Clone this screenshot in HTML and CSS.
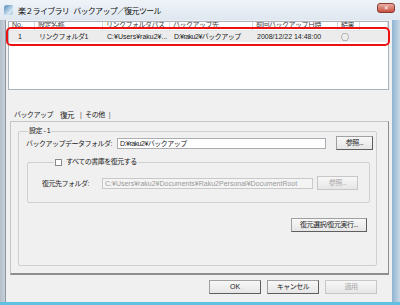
FILE: index.html
```html
<!DOCTYPE html>
<html lang="ja">
<head>
    <meta charset="UTF-8">
    <title>楽２ライブラリ バックアップ／復元ツール</title>
    <link rel="stylesheet" href="styles.css">
</head>
<body>
    <div class="window">
        <div class="titlebar">
            <div class="app-icon"></div>
            <div class="title">楽２ライブラリ バックアップ／復元ツール</div>
            <div class="close">✕</div>
        </div>
        <div class="client">
            <div class="listview">
                <div class="lv-header">
                    <div class="col c-no latin">No.</div>
                    <div class="col c-name">設定名称</div>
                    <div class="col c-link">リンクフォルダパス</div>
                    <div class="col c-dest">バックアップ先</div>
                    <div class="col c-date">前回バックアップ日時</div>
                    <div class="col c-res">結果</div>
                    <div class="col c-rest"></div>
                </div>
                <div class="lv-row">
                    <div class="col c-no num latin">1</div>
                    <div class="col c-name">リンクフォルダ1</div>
                    <div class="col c-link latin">C:¥Users¥raku2¥...</div>
                    <div class="col c-dest">D:¥raku2¥バックアップ</div>
                    <div class="col c-date latin">2008/12/22 14:48:00</div>
                    <div class="col c-res result">○</div>
                </div>
                <div class="mark"></div>
            </div>

            <div class="tabs">
                <span class="tab">バックアップ</span>
                <span class="tab active">復元</span>
                <span class="sep">|</span>
                <span class="tab">その他</span>
                <span class="sep">|</span>
            </div>
            <div class="panel">
                <fieldset class="group">
                    <legend>設定 - 1</legend>
                    <div class="field-row">
                        <span class="label">バックアップデータフォルダ:</span>
                        <div class="input wide">D:¥raku2¥バックアップ</div>
                        <div class="btn small">参照...</div>
                    </div>
                    <fieldset class="group inner">
                        <legend><span class="check"></span>すべての書庫を復元する</legend>
                        <div class="field-row">
                            <span class="label">復元先フォルダ:</span>
                            <div class="input disabled latin">C:¥Users¥raku2¥Documents¥Raku2Personal¥DocumentRoot</div>
                            <div class="btn small disabled">参照...</div>
                        </div>
                    </fieldset>
                    <div class="action-row">
                        <div class="btn action">復元選択/復元実行...</div>
                    </div>
                </fieldset>
            </div>
            <div class="buttons">
                <div class="btn dlg latin">OK</div>
                <div class="btn dlg">キャンセル</div>
                <div class="btn dlg disabled">適用</div>
            </div>
        </div>
    </div>
</body>
</html>
```

FILE: styles.css
```css
body {
    margin: 0;
    font-family: "Liberation Sans", "Noto Sans CJK JP", sans-serif;
    font-size: 7px;
    letter-spacing: -0.5px;
    color: #1a1a1a;
}
.latin {
    letter-spacing: 0;
}
.window {
    width: 400px;
    height: 305px;
    background: linear-gradient(90deg, #b4bec9 0%, #d3dbe4 2%, #dce4ed 96%, #8fb4d2 98%, #c9d8e6 100%);
    box-sizing: border-box;
    border-bottom: 3px solid #5fc0e0;
    overflow: hidden;
}
.titlebar {
    height: 20px;
    display: flex;
    align-items: center;
    padding: 0 5px 0 4px;
    box-sizing: border-box;
    background: linear-gradient(#eef3f8, #dfe7f0);
}
.app-icon {
    width: 9px;
    height: 10px;
    margin-right: 5px;
    border-radius: 3px 1px 3px 1px;
    background: linear-gradient(135deg, #4d86b8, #d7e8f3 70%, #8fb8d6);
}
.title {
    flex: 1;
    font-family: "Noto Sans CJK JP", sans-serif;
    font-size: 8px;
    letter-spacing: -0.7px;
    word-spacing: 3px;
    color: #111;
}
.close {
    align-self: flex-start;
    width: 18px;
    height: 10px;
    margin-top: 3px;
    border-radius: 3px;
    background: linear-gradient(#e9ada3, #c8503f);
    border: 1px solid #8a3b33;
    box-sizing: border-box;
    color: #fff;
    font-size: 6px;
    line-height: 8px;
    text-align: center;
    font-family: "DejaVu Sans", sans-serif;
    font-weight: bold;
}
.client {
    margin: 0 8px 0 5px;
    height: 282px;
    background: #f0f0f0;
    border-left: 1px solid #8d97a3;
    box-sizing: border-box;
    overflow: hidden;
}
.listview {
    position: relative;
    margin: 1px 3px 0 2px;
    height: 69px;
    background: #fff;
    border: 1px solid #a9b3bd;
    box-sizing: border-box;
}
.lv-header, .lv-row {
    display: flex;
    white-space: nowrap;
}
.lv-header {
    height: 8px;
    line-height: 6px;
    overflow: hidden;
    color: #3a3a3a;
    border-bottom: 1px solid #e4e7ea;
}
.lv-header .col {
    border-right: 1px solid #d4d9df;
    padding-left: 3px;
}
.lv-row {
    height: 11px;
    line-height: 11px;
    background: #ececec;
}
.col {
    overflow: hidden;
    padding-left: 4px;
    box-sizing: border-box;
}
.c-no { width: 26px; }
.num { padding-left: 9px; }
.c-name { width: 68px; }
.c-link { width: 67px; }
.c-dest { width: 83px; }
.c-date { width: 85px; }
.c-res { width: 22px; }
.c-rest { flex: 1; }
.result {
    font-family: "Noto Sans CJK JP", sans-serif;
    font-size: 8px;
    letter-spacing: 0;
    padding-left: 3px;
}
.mark {
    position: absolute;
    left: -3px;
    top: 5px;
    width: 384px;
    height: 19px;
    border: 2.5px solid #ee1111;
    border-radius: 5px;
    box-sizing: border-box;
}
.tabs {
    margin: 17px 0 0 7px;
    height: 14px;
    display: flex;
    align-items: center;
    gap: 3px;
}
.tab {
    padding: 0 1px;
}
.tab.active {
    padding: 0 3px;
    font-size: 7.5px;
}
.sep {
    color: #555;
}
.panel {
    margin: 0 3px 0 4px;
    height: 154px;
    border: 1px solid #c5c5c5;
    border-right-color: #8e8e8e;
    border-bottom: 2px solid #8e8e8e;
    box-sizing: border-box;
    padding: 4px 11px 0 7px;
}
.group {
    margin: 0;
    border: 1px solid #d0d0d0;
    border-radius: 2px;
    padding: 0 3px 0 7px;
    height: 140px;
    box-sizing: border-box;
    min-width: 0;
}
.group legend {
    padding: 0 1px;
    margin-left: 2px;
    line-height: 10px;
}
.group.inner {
    height: 46px;
    margin: 7px 3px 0 1px;
    padding: 9px 8px 0 14px;
}
.inner legend {
    display: flex;
    align-items: center;
    margin-left: 12px;
}
.check {
    width: 5px;
    height: 5px;
    border: 1px solid #8a8a8a;
    background: #fff;
    margin-right: 4px;
}
.field-row {
    display: flex;
    align-items: center;
    height: 14px;
    white-space: nowrap;
}
.label {
    width: 91px;
    flex: none;
}
.inner .label {
    width: 60px;
}
.input {
    height: 11px;
    line-height: 10px;
    border: 1px solid #abadb3;
    background: #fff;
    padding-left: 2px;
    box-sizing: border-box;
    overflow: hidden;
    flex: none;
}
.input.wide {
    width: 209px;
    margin-right: 10px;
}
.input.disabled {
    width: 211px;
    margin-right: 4px;
    background: #f4f4f4;
    color: #9a9a9a;
    border-color: #c9c9c9;
}
.btn {
    height: 14px;
    line-height: 12px;
    box-sizing: border-box;
    text-align: center;
    background: linear-gradient(#f7f7f7, #e6e6e6);
    border: 1px solid #a0a0a0;
    border-right-color: #5e5e5e;
    border-bottom-color: #5e5e5e;
    white-space: nowrap;
    flex: none;
}
.btn.small {
    width: 37px;
}
.inner .btn.small {
    width: 41px;
}
.btn.disabled {
    color: #a8a8a8;
    border-color: #c7c7c7;
}
.action-row {
    display: flex;
    justify-content: flex-end;
    margin: 15px 6px 0 0;
}
.btn.action {
    width: 76px;
}
.buttons {
    display: flex;
    justify-content: flex-end;
    gap: 6px;
    margin: 5px 15px 0 0;
}
.btn.dlg {
    width: 52px;
}
```
